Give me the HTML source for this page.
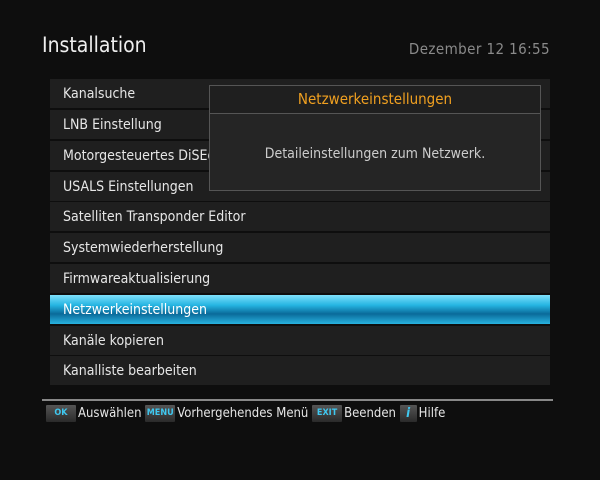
<!DOCTYPE html><html><head><style>
body{margin:0;width:600px;height:480px;background:#0e0e0e;font-family:"DejaVu Sans Condensed","Liberation Sans",sans-serif;overflow:hidden;position:relative;color:#e6e6e6}
.t{position:absolute;left:42px;top:33px;font-size:21px;color:#eee}
.d{position:absolute;right:50px;top:40px;font-size:15px;color:#8a8a8a;letter-spacing:0.4px}
.r{position:absolute;left:50px;width:500px;height:29px;background:#1f1f1f;font-size:14px;line-height:30px;text-indent:13px}
.sel{background:linear-gradient(#7fe0fb 0%,#25b5e2 35%,#0a6a9a 65%,#28b3e0 100%);color:#fff}
.pop{position:absolute;left:209px;top:85px;width:330px;height:104px;border:1px solid #555;background:#252525}
.pt{height:27px;border-bottom:1px solid #555;text-align:center;color:#f0a020;font-size:15px;line-height:27px;background:#1f1f1f}
.pb{text-align:center;font-size:14px;color:#ccc;margin-top:32px}
.ln{position:absolute;left:42px;top:399px;width:511px;height:2px;background:#888}
.f{position:absolute;top:404px;left:46px;font-size:13px;line-height:19px;white-space:nowrap}
.b{display:inline-block;height:17px;background:linear-gradient(#555,#2a2a2a);color:#3fc8f0;font-size:9px;font-weight:bold;line-height:17px;text-align:center;vertical-align:middle;margin-right:2px;border-radius:1px}
</style></head><body>
<div class="t">Installation</div><div class="d">Dezember 12 16:55</div>
<div class="r" style="top:79px">Kanalsuche</div>
<div class="r" style="top:110px">LNB Einstellung</div>
<div class="r" style="top:141px">Motorgesteuertes DiSEqC</div>
<div class="r" style="top:172px">USALS Einstellungen</div>
<div class="r" style="top:202px">Satelliten Transponder Editor</div>
<div class="r" style="top:233px">Systemwiederherstellung</div>
<div class="r" style="top:264px">Firmwareaktualisierung</div>
<div class="r sel" style="top:295px">Netzwerkeinstellungen</div>
<div class="r" style="top:326px">Kanäle kopieren</div>
<div class="r" style="top:356px">Kanalliste bearbeiten</div>
<div class="pop"><div class="pt">Netzwerkeinstellungen</div><div class="pb">Detaileinstellungen zum Netzwerk.</div></div>
<div class="ln"></div>
<div class="f"><span class="b" style="width:30px">OK</span>Auswählen <span class="b" style="width:30px">MENU</span>Vorhergehendes Menü <span class="b" style="width:30px">EXIT</span>Beenden <span class="b" style="width:17px;font-size:13px;font-style:italic">i</span>Hilfe</div>
</body></html>
